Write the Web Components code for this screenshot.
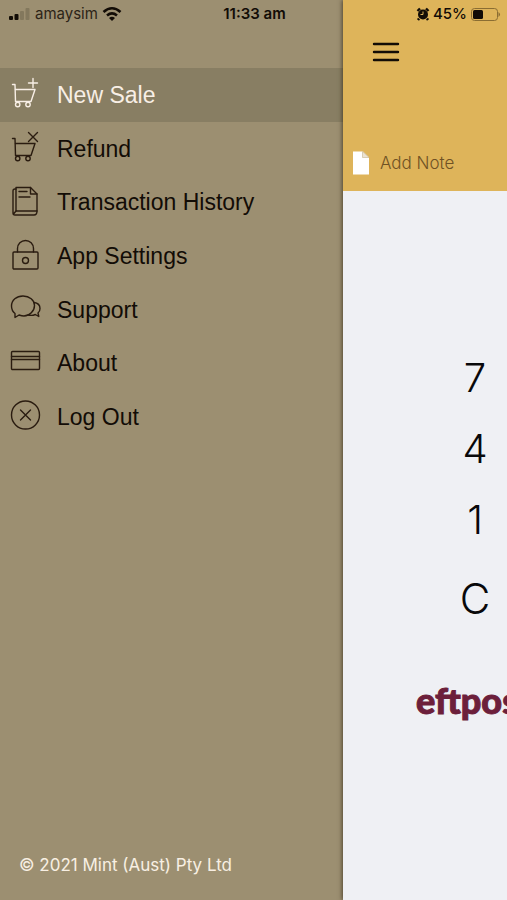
<!DOCTYPE html>
<html lang="en">
<head>
<meta charset="utf-8">
<meta name="viewport" content="width=device-width, initial-scale=1">
<title>Mint</title>
<style>
  html, body { margin: 0; height: 100%; }
  body { overflow: hidden; font-family: "Liberation Sans", Arial, sans-serif; color: #120c06; }
</style>
</head>
<body>
<mint-app></mint-app>
<script>
const define = (name, html, setup) => {
  const template = document.createElement('template');
  template.innerHTML = html;
  customElements.define(name, class extends HTMLElement {
    constructor() {
      super();
      this.attachShadow({ mode: 'open' }).append(template.content.cloneNode(true));
    }
    connectedCallback() { if (setup) setup(this, this.shadowRoot); }
  });
};

const trolley = '<path d="M2.500 7.500H5L5.500 24.500H21L25 12.500H5"/><circle cx="7.700" cy="27.500" r="2.200"/><circle cx="18" cy="27.500" r="2.200"/>';
const ICONS = {
  sale: trolley + '<path d="M23 1.500v9M18.500 6h9"/>',
  refund: trolley + '<path d="M18.500 1.500l9 9M27.500 1.500l-9 9"/>',
  history: '<path d="M6 3.500H20.500L27 10v17H6z"/><path d="M20.500 3.500V10H27M9 7.500h8M9 13h11"/><path d="M6 5H5Q3 5 3 7v22q0 2 2 2h19q3 0 3-4M3.500 30L6 27"/>',
  lock: '<rect x="3" y="14" width="25" height="17" rx="1"/><path d="M7.500 14v-3.500a8 8 0 0 1 16 0V14"/><circle cx="15.500" cy="22.500" r="3"/>',
  support: '<path d="M5 21.500C2.500 19.500 1.500 17 1.500 14c0-6 5-10 11.500-10s11.500 4 11.500 9.500S19.500 24 14 24c-2 0-3.500-.5-5-1l-4 2.500z"/><path d="M24 10.500c4 .5 6 3 6 6 0 2-.8 3.600-2 4.500l.8 3.500-3.500-2C22 24 20 23.500 18 23"/>',
  card: '<rect x="1.500" y="6.500" width="28" height="18" rx="1"/><path d="M1.500 11.500h28M1.500 14.500h28"/>',
  logout: '<circle cx="15.500" cy="16" r="14"/><path d="M10.500 11l10 10M20.500 11l-10 10"/>'
};

define('menu-icon', `
<style>
  :host { display: block; flex: none; width: 32px; height: 34px; }
  svg { display: block; width: 32px; height: 34px; fill: none; stroke: currentColor; stroke-width: 1.4; stroke-linecap: round; stroke-linejoin: round; }
</style>
<svg viewBox="0 0 32 34" aria-hidden="true"></svg>`,
(host, root) => { root.querySelector('svg').innerHTML = ICONS[host.getAttribute('name')]; });

define('menu-item', `
<style>
  :host { display: block; }
  a { display: flex; align-items: center; gap: 15px; height: 100%; padding: 0 10px; box-sizing: border-box; color: inherit; text-decoration: none; font-size: 23px; line-height: 28px; white-space: nowrap; }
  menu-icon { margin-bottom: 2px; color: #2a1c10; }
  :host([current]) a { background: #887e63; color: #f8efe6; }
  :host([current]) menu-icon { color: inherit; }
</style>
<a href="#"><menu-icon></menu-icon><slot></slot></a>`,
(host, root) => {
  root.querySelector('menu-icon').replaceWith(Object.assign(document.createElement('template'), {
    innerHTML: '<menu-icon name="' + host.getAttribute('icon') + '"></menu-icon>' }).content);
  if (host.hasAttribute('current')) root.querySelector('a').setAttribute('aria-current', 'page');
});

define('side-drawer', `
<style>
  :host { display: flex; flex-direction: column; justify-content: space-between; box-sizing: border-box; padding: 68px 0 24px; background: #9c8f71; }
  nav { display: grid; grid-auto-rows: 1fr; height: 376px; }
  p { margin: 0; padding: 0 19px; font: 400 17px/22px Inter, sans-serif; color: #f8efe3; }
</style>
<nav aria-label="Main"><slot></slot></nav>
<p>© 2021 Mint (Aust) Pty Ltd</p>`);

define('amount-header', `
<style>
  :host { display: flex; flex-direction: column; justify-content: space-between; align-items: flex-start; box-sizing: border-box; height: 191px; padding: 36px 8px 12px; background: #deb45a; }
  button { border: 0; margin: 0; background: none; color: inherit; font: inherit; }
  .menu { padding: 0 0 0 20px; }
  .note { display: flex; align-items: center; gap: 10px; padding: 0; height: 32px; font: 300 17px/24px Inter, sans-serif; color: #6f5224; white-space: nowrap; }
  svg { display: block; }
</style>
<button class="menu" aria-label="Menu"><svg width="30" height="32" viewBox="0 0 30 32" stroke="#120c06" stroke-width="2.4" stroke-linecap="round"><path d="M3 8h24M3 16h24M3 24h24"/></svg></button>
<button class="note"><svg width="19" height="26" viewBox="0 0 19 26"><path fill="#fff" d="M2 1.500h10l6 6V24.500H2z"/><path d="M11.500 1.500v6H18z" fill="#ece3d2" stroke="#cdbd9b" stroke-width=".7"/></svg>Add Note</button>`);

define('key-pad', `
<style>
  :host { display: flex; flex-direction: column; align-items: flex-start; padding: 151px 0 0 100px; }
  button { width: 64px; height: 71px; padding: 0; border: 0; background: none; color: #08080a; font: 300 40px/48px Inter, sans-serif; }
  .clear { height: 80px; margin-top: 4px; font-size: 42px; }
</style>
<button>7</button><button>4</button><button>1</button><button class="clear">C</button>`);

define('eftpos-logo', `
<style>
  :host { display: block; padding: 37px 0 0 73px; font: 900 36px/48px Lato, sans-serif; color: #6c1f3b; -webkit-text-stroke: 1px #6c1f3b; white-space: nowrap; }
</style>
<slot></slot>`);

define('sale-page', `
<style>
  :host { display: block; position: relative; overflow: hidden; background: #eff0f4; box-shadow: -1px 0 4px rgba(50, 40, 20, .7); }
</style>
<amount-header></amount-header><key-pad></key-pad><eftpos-logo>eftpos</eftpos-logo>`);

define('status-bar', `
<style>
  :host { display: grid; grid-template-columns: 1fr auto 1fr; align-items: center; height: 28px; padding: 0 6px 0 8px; box-sizing: border-box; font: 500 15px/20px Inter, sans-serif; white-space: nowrap; }
  .side { display: flex; align-items: center; gap: 4px; }
  .end { justify-content: flex-end; gap: 3px; }
  .carrier { font-weight: 400; color: #2c2417; }
  time { font-weight: 600; }
  svg { display: block; flex: none; }
</style>
<div class="side">
  <svg width="23" height="14" viewBox="0 0 23 14"><g fill="#120c06"><rect x="1" y="9" width="4" height="4" rx="1"/><rect x="6.500" y="7" width="4" height="6" rx="1"/></g><g fill="#83785d"><rect x="12" y="4" width="4" height="9" rx="1"/><rect x="17.500" y="1" width="4" height="12" rx="1"/></g></svg>
  <span class="carrier">amaysim</span>
  <svg width="20" height="16" viewBox="0 0 20 16" fill="none" stroke="#120c06" stroke-width="2.600"><path d="M1.500 6Q10-1.500 18.500 6M5 9.500q5-4.200 10 0"/><path d="M10 15l-3-3q3-2.500 6 0z" fill="#120c06" stroke="none"/></svg>
</div>
<time>11:33 am</time>
<div class="side end">
  <svg width="14" height="14" viewBox="0 0 14 14"><circle cx="7" cy="7.500" r="5" fill="#120c06"/><path d="M1.500 4L4 1.500M12.500 4L10 1.500M3 11.500l-1 1.500M11 11.500l1 1.500" stroke="#120c06" stroke-width="2.400"/><path d="M7 4.500v3h-2.500" fill="none" stroke="#deb45a"/></svg>
  <span>45%</span>
  <svg width="31" height="15" viewBox="0 0 31 15"><rect x="1.500" y="1.500" width="26" height="12" rx="3" fill="none" stroke="#8a6d32"/><rect x="3" y="3" width="10" height="9" rx="1.500" fill="#120c06"/><path d="M28.500 5q3 2.500 0 5z" fill="#8a6d32"/></svg>
</div>`);

define('mint-app', `
<style>
  :host { display: grid; grid-template-columns: minmax(0, 1fr) 164px; min-height: 100vh; position: relative; }
  status-bar { position: absolute; top: 0; left: 0; right: 0; }
</style>
<side-drawer>
  <menu-item icon="sale" current>New Sale</menu-item>
  <menu-item icon="refund">Refund</menu-item>
  <menu-item icon="history">Transaction History</menu-item>
  <menu-item icon="lock">App Settings</menu-item>
  <menu-item icon="support">Support</menu-item>
  <menu-item icon="card">About</menu-item>
  <menu-item icon="logout">Log Out</menu-item>
</side-drawer>
<sale-page></sale-page>
<status-bar></status-bar>`);
</script>
</body>
</html>
